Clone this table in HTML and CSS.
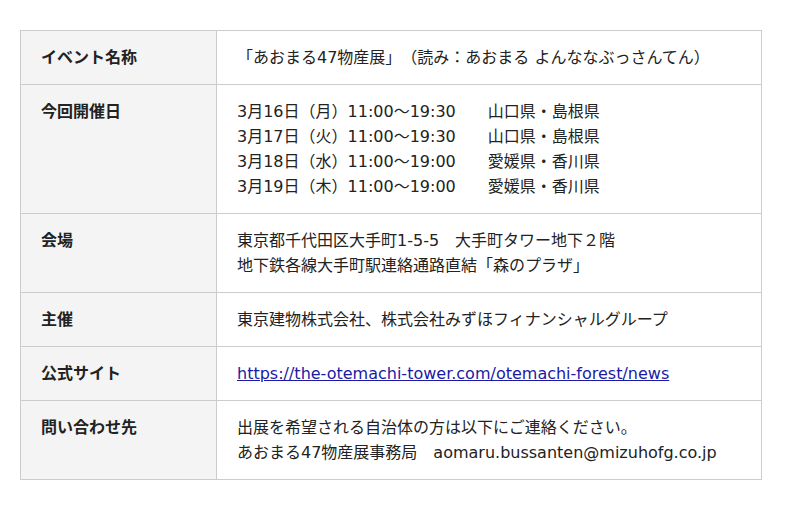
FILE: index.html
```html
<!DOCTYPE html>
<html lang="ja">
<head>
<meta charset="utf-8">
<link rel="stylesheet" href="styles.css">
</head>
<body>
<table class="info">
  <tr>
    <th>イベント名称</th>
    <td>「あおまる47物産展」（読み：あおまる よんななぶっさんてん）</td>
  </tr>
  <tr>
    <th>今回開催日</th>
    <td>3月16日（月）11:00〜19:30　　山口県・島根県<br>3月17日（火）11:00〜19:30　　山口県・島根県<br>3月18日（水）11:00〜19:00　　愛媛県・香川県<br>3月19日（木）11:00〜19:00　　愛媛県・香川県</td>
  </tr>
  <tr>
    <th>会場</th>
    <td>東京都千代田区大手町1-5-5　大手町タワー地下２階<br>地下鉄各線大手町駅連絡通路直結「森のプラザ」</td>
  </tr>
  <tr>
    <th>主催</th>
    <td>東京建物株式会社、株式会社みずほフィナンシャルグループ</td>
  </tr>
  <tr>
    <th>公式サイト</th>
    <td><a class="link" href="#">https://the-otemachi-tower.com/otemachi-forest/news</a></td>
  </tr>
  <tr>
    <th>問い合わせ先</th>
    <td>出展を希望される自治体の方は以下にご連絡ください。<br>あおまる47物産展事務局　aomaru.bussanten@mizuhofg.co.jp</td>
  </tr>
</table>
</body>
</html>
```
FILE: styles.css
```css
html, body {
  margin: 0;
  padding: 0;
  background: #fff;
}
body {
  padding: 30px 38px 30px 20px;
  font-family: "DejaVu Sans", "Noto Sans CJK JP", sans-serif;
  font-size: 16px;
  color: #222;
  text-spacing-trim: space-all;
}
.info {
  width: 742px;
  border-collapse: collapse;
  border: 1px solid #ddd;
}
.info th,
.info td {
  border: 1px solid #ccc;
  padding: 14px 20px;
  line-height: 25px;
  text-align: left;
  vertical-align: top;
  white-space: nowrap;
}
.info th {
  width: 155px;
  background: #f4f4f4;
  font-weight: bold;
  color: #222;
}
.info td {
  background: #fff;
}
.link {
  color: #1a1aa6;
  text-decoration: underline;
}
```
